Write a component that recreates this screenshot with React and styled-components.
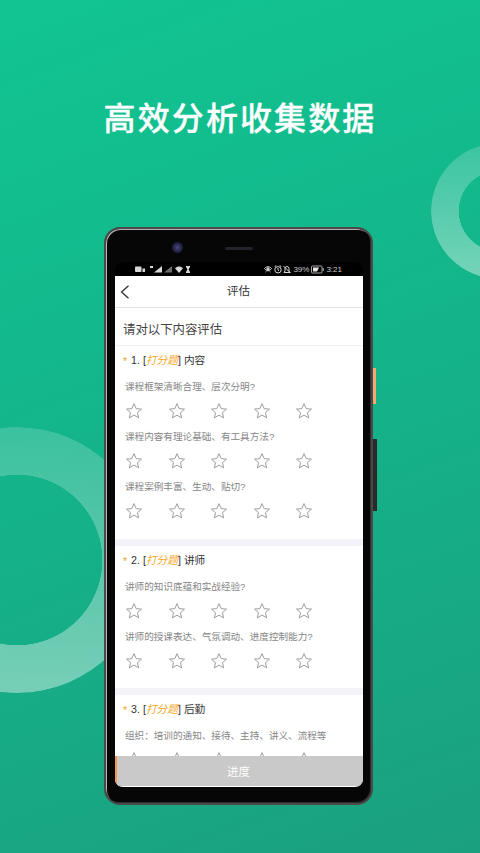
import React from 'react'
import styled, { createGlobalStyle } from 'styled-components'

const sections = [
  {
    no: 1,
    name: '内容',
    questions: ['课程框架清晰合理、层次分明?', '课程内容有理论基础、有工具方法?', '课程案例丰富、生动、贴切?'],
  },
  {
    no: 2,
    name: '讲师',
    questions: ['讲师的知识底蕴和实战经验?', '讲师的授课表达、气氛调动、进度控制能力?'],
  },
  {
    no: 3,
    name: '后勤',
    questions: ['组织\uFF1A培训的通知、接待、主持、讲义、流程等'],
  },
]

const Star = () => (
  <StarIcon viewBox="0 0 24 24">
    <path d="M12 2.2l2.9 6.6 7.1.7-5.4 4.7 1.6 7-6.2-3.7-6.2 3.7 1.6-7L2 9.5l7.1-.7z" />
  </StarIcon>
)

const App = () => (
  <Page>
    <GlobalStyle />
    <Ring $size={136} $hole={40} $top={143} $left={431} />
    <Ring $size={266} $hole={85} $top={427} $left={-116} />
    <Headline>高效分析收集数据</Headline>
    <Phone>
      <VolumeKey />
      <PowerKey />
      <TopBezel>
        <Camera />
        <Speaker />
      </TopBezel>
      <StatusBar>
        <StatusGroup>
          <svg width="55" height="9" viewBox="0 0 55 9" fill="#d8d8d8">
            <rect x="0" y="1.5" width="6.5" height="5.5" rx="1" />
            <rect x="7.5" y="3.5" width="2.5" height="3.5" />
            <rect x="15" y="1" width="3" height="2" />
            <path d="M19 7.5l8-6.5v6.5z" />
            <path d="M29 7.5l8-6.5v6.5z" opacity="0.5" />
            <path d="M40 3.2c2.6-2.4 5.4-2.4 8 0l-4 4.8z" />
            <path d="M51 1h4v1l-1.4 2.5 1.4 2.5v1h-4v-1l1.4-2.5-1.4-2.5z" />
          </svg>
        </StatusGroup>
        <StatusGroup>
          <svg width="27" height="9" viewBox="0 0 27 9" fill="none" stroke="#d8d8d8">
            <path d="M0.5 3.5c2-2.4 5-2.4 7 0-2 3-5 3-7 0z" />
            <circle cx="4" cy="4" r="1.2" fill="#d8d8d8" />
            <path d="M1.5 7l1-.8M6.5 7l-1-.8" />
            <circle cx="14" cy="4.8" r="3.2" />
            <path d="M14 3v2l1 .8M10.7 1.6l1.6-1M17.3 1.6l-1.6-1" />
            <path d="M20 7.5h6l-1-1.5V3.5a2 2 0 0 0-4 0V6zM19.5 1l7 7" />
          </svg>
          <StatusText>39%</StatusText>
          <svg width="13" height="9" viewBox="0 0 13 9">
            <rect x="0.5" y="1" width="10.5" height="7" rx="1" fill="none" stroke="#a8a8a8" />
            <path d="M2 2.5h6l-2 4H2z" fill="#e8e8e8" />
            <rect x="11.6" y="3" width="1.2" height="3" fill="#a8a8a8" />
          </svg>
          <StatusText>3:21</StatusText>
        </StatusGroup>
      </StatusBar>
      <Screen>
        <NavBar>
          <BackIcon viewBox="0 0 10 14">
            <path d="M8.5 0.8L1.5 7l7 6.2" />
          </BackIcon>
          <NavTitle>评估</NavTitle>
        </NavBar>
        <Body>
          <FormTitle>请对以下内容评估</FormTitle>
          {sections.map((section) => (
            <Section key={section.no}>
              <SectionTitle>
                <Required>*</Required>
                {section.no}. [<TypeTag>打分题</TypeTag>] {section.name}
              </SectionTitle>
              {section.questions.map((question) => (
                <Question key={question}>
                  <QuestionText>{question}</QuestionText>
                  <Stars>
                    {[1, 2, 3, 4, 5].map((n) => (
                      <Star key={n} />
                    ))}
                  </Stars>
                </Question>
              ))}
            </Section>
          ))}
        </Body>
        <ProgressBar>进度</ProgressBar>
      </Screen>
    </Phone>
  </Page>
)

export default App

const GlobalStyle = createGlobalStyle`
  html, body {
    margin: 0;
    padding: 0;
  }
  body {
    font-family: "Liberation Sans", "Noto Sans CJK SC", sans-serif;
  }
`

const Page = styled.div`
  position: relative;
  width: 480px;
  height: 853px;
  overflow: hidden;
  display: flex;
  flex-direction: column;
  align-items: center;
  background: linear-gradient(160deg, #11c591 0%, #14b389 50%, #1ba07f 100%);
`

const Ring = styled.div`
  position: absolute;
  top: ${(p) => p.$top}px;
  left: ${(p) => p.$left}px;
  width: ${(p) => p.$size}px;
  height: ${(p) => p.$size}px;
  border-radius: 50%;
  background: linear-gradient(180deg, rgba(255, 255, 255, 0.17), rgba(255, 255, 255, 0.42));
  mask: radial-gradient(circle, transparent ${(p) => p.$hole}px, #000 ${(p) => p.$hole + 0.5}px);
`

const Headline = styled.h1`
  position: relative;
  margin: 99px 0 0;
  height: 40px;
  font-size: 32px;
  line-height: 40px;
  font-weight: 500;
  letter-spacing: 2.1px;
  -webkit-text-stroke: 0.3px #fff;
  color: #fff;
`

const Phone = styled.div`
  position: relative;
  box-sizing: border-box;
  width: 269px;
  height: 578px;
  margin: 88px 0 0 -3px;
  padding: 0 8px 0 9px;
  display: flex;
  flex-direction: column;
  border-radius: 16px;
  background: #060606;
  border: 2px solid #4a4a4a;
  box-shadow: inset 1px 1px 0 #b5b5b5, inset -1px -1px 0 #2e2e2e;
`

const VolumeKey = styled.div`
  position: absolute;
  right: -5px;
  top: 139px;
  width: 3px;
  height: 36px;
  background: #f3a86d;
`

const PowerKey = styled.div`
  position: absolute;
  right: -6px;
  top: 210px;
  width: 4px;
  height: 72px;
  background: #2a2a2a;
`

const TopBezel = styled.div`
  position: relative;
  height: 33px;
  flex-shrink: 0;
  display: flex;
  align-items: center;
  justify-content: center;
`

const Camera = styled.div`
  position: absolute;
  left: 57px;
  top: 13px;
  width: 11px;
  height: 11px;
  border-radius: 50%;
  background: radial-gradient(circle at 50% 50%, #4a4a80 0%, #1f1d3d 60%, #121222 100%);
`

const Speaker = styled.div`
  width: 28px;
  height: 3px;
  margin-top: 5px;
  border-radius: 2px;
  background: #23232b;
`

const StatusBar = styled.div`
  height: 14px;
  flex-shrink: 0;
  display: flex;
  align-items: center;
  justify-content: space-between;
  padding: 0 21px 0 20px;
  background: #000;
  border-radius: 8px 8px 0 0;
`

const StatusGroup = styled.div`
  display: flex;
  align-items: center;
  gap: 2px;
`

const StatusText = styled.span`
  font-size: 8px;
  line-height: 9px;
  color: #c8c8c8;
`

const Screen = styled.div`
  position: relative;
  flex: 1;
  margin-bottom: 16px;
  overflow: hidden;
  display: flex;
  flex-direction: column;
  background: #fff;
  border-radius: 0 0 8px 8px;
`

const NavBar = styled.div`
  position: relative;
  box-sizing: border-box;
  height: 32px;
  padding-bottom: 3px;
  flex-shrink: 0;
  display: flex;
  align-items: center;
  justify-content: center;
  border-bottom: 1px solid #e2e2e2;
`

const BackIcon = styled.svg`
  position: absolute;
  left: 5px;
  top: 9px;
  width: 10px;
  height: 14px;
  fill: none;
  stroke: #333;
  stroke-width: 1.3;
`

const NavTitle = styled.span`
  font-size: 11.5px;
  color: #333;
  margin-right: 1px;
`

const Body = styled.div`
  flex: 1;
  overflow: hidden;
`

const FormTitle = styled.div`
  height: 38px;
  padding-left: 8px;
  font-size: 12.4px;
  line-height: 44px;
  color: #444;
  border-bottom: 1px solid #f0f0f0;
  box-sizing: border-box;
`

const Section = styled.section`
  padding: 5px 0 18.5px 10px;
  border-bottom: 7px solid #f2f2f8;
`

const SectionTitle = styled.div`
  position: relative;
  height: 19px;
  padding-left: 6px;
  font-size: 10.7px;
  line-height: 19px;
  color: #333;
`

const Required = styled.span`
  position: absolute;
  left: -2px;
  top: 1px;
  color: #f5a623;
`

const TypeTag = styled.span`
  font-style: italic;
  color: #f5a623;
`

const Question = styled.div`
  padding-top: 9px;
`

const QuestionText = styled.div`
  height: 15px;
  font-size: 9.6px;
  line-height: 15px;
  color: #868686;
  white-space: nowrap;
`

const Stars = styled.div`
  display: flex;
  gap: 24.5px;
  height: 26px;
  padding: 8px 0 0 0;
  box-sizing: border-box;
`

const StarIcon = styled.svg`
  width: 18px;
  height: 18px;
  flex-shrink: 0;
  fill: none;
  stroke: #9a9a9a;
  stroke-width: 1.3;
`

const ProgressBar = styled.div`
  position: absolute;
  left: 0;
  right: 0;
  bottom: 1px;
  height: 30px;
  box-sizing: border-box;
  padding-right: 3px;
  border-left: 2px solid #f0954a;
  display: flex;
  align-items: center;
  justify-content: center;
  font-size: 11.5px;
  color: #fff;
  background: #c9c9c9;
`
